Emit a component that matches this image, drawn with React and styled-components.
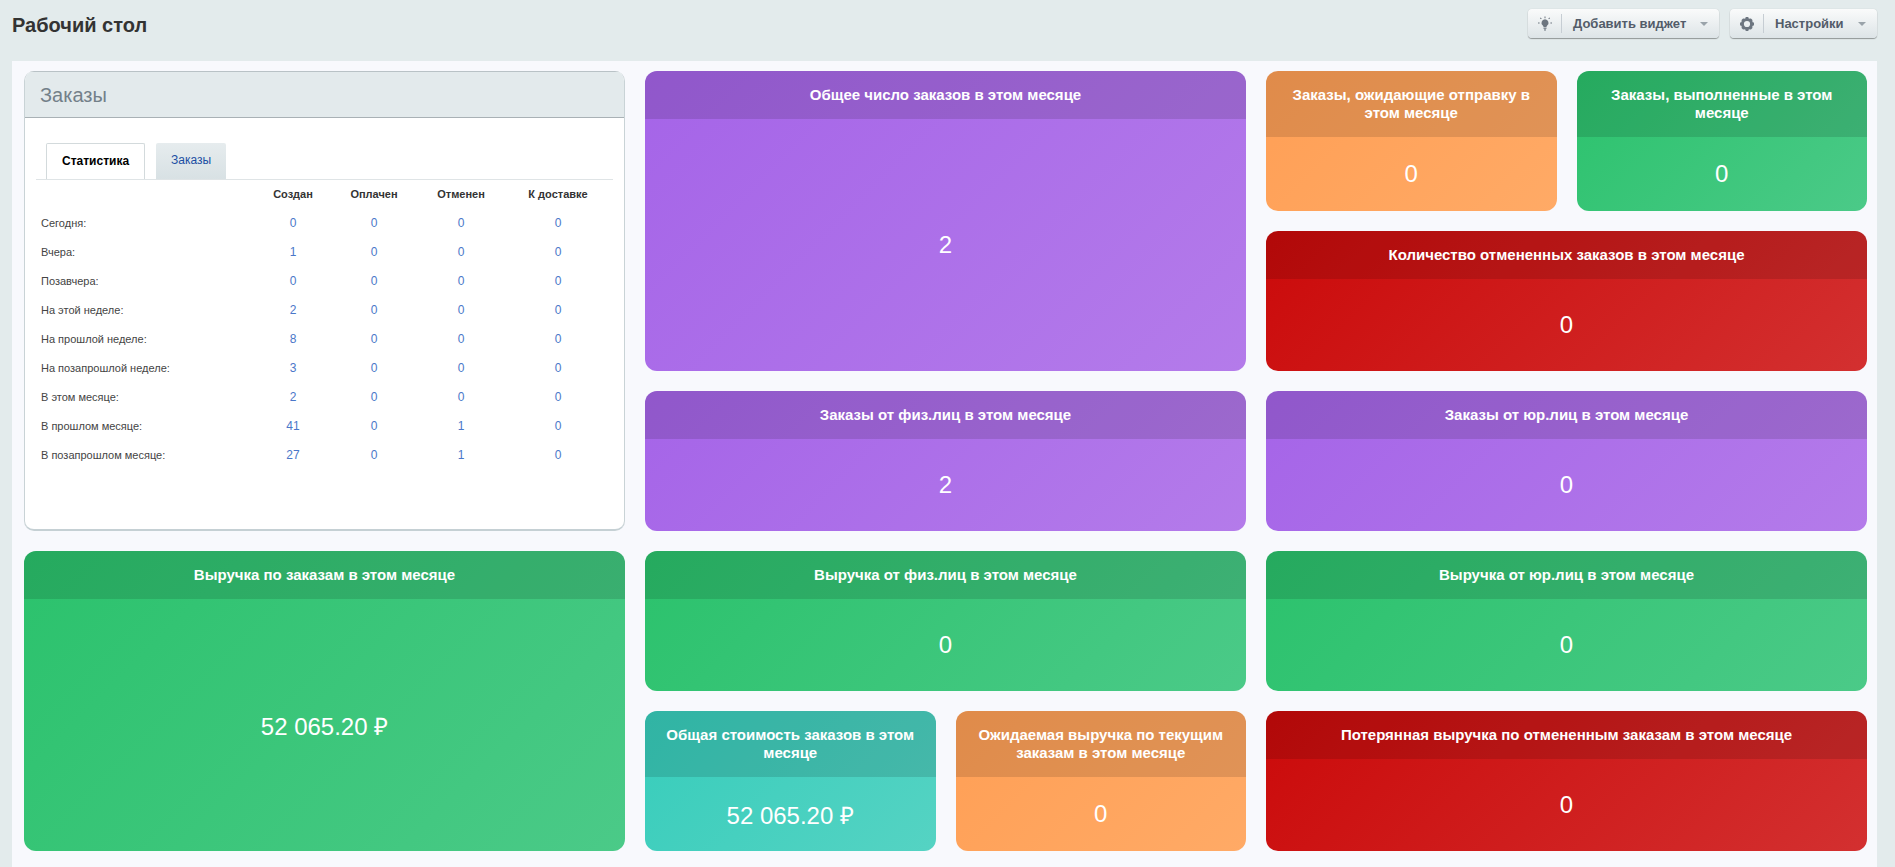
import React from "react";
import styled, { createGlobalStyle } from "styled-components";

const GlobalStyle = createGlobalStyle`
  html, body {
    margin: 0;
    padding: 0;
    background: #e3ebec;
    font-family: "Liberation Sans", Arial, sans-serif;
  }
`;

const Page = styled.div`
  width: 1895px;
  height: 867px;
  overflow: hidden;
  padding: 0 18px 0 12px;
  box-sizing: border-box;
`;

const TopBar = styled.div`
  display: flex;
  justify-content: space-between;
  align-items: flex-start;
  height: 61px;
  padding-top: 9px;
  box-sizing: border-box;
`;

const PageTitle = styled.h1`
  margin: 4px 0 0;
  font-size: 20px;
  line-height: 24px;
  font-weight: bold;
  color: #333;
`;

const Actions = styled.div`
  display: flex;
  gap: 11px;
`;

const ActionButton = styled.div`
  display: flex;
  align-items: center;
  height: 29px;
  width: ${(p) => p.$width}px;
  box-sizing: border-box;
  border-radius: 4px;
  background: linear-gradient(to bottom, #fafbfb, #dde4e7);
  box-shadow: 0 1px 1px rgba(0, 0, 0, 0.35), 0 0 1px rgba(0, 0, 0, 0.2);
  font-size: 13px;
  font-weight: bold;
  color: #535c69;
`;

const IconSlot = styled.span`
  display: flex;
  align-items: center;
  justify-content: center;
  width: 33px;
  height: 19px;
  border-right: 1px solid #c6cdd3;
`;

const ButtonLabel = styled.span`
  flex: 1;
  padding-left: 11px;
`;

const Caret = styled.span`
  width: 0;
  height: 0;
  margin-right: 11px;
  border-left: 4px solid transparent;
  border-right: 4px solid transparent;
  border-top: 4px solid #9aa3aa;
`;

const Content = styled.div`
  display: grid;
  grid-template-columns: repeat(6, 1fr);
  grid-auto-rows: 140px;
  gap: 20px;
  height: 806px;
  padding: 10px 10px 16px 12px;
  box-sizing: border-box;
  background: #f8f9fd;
`;

const Panel = styled.div`
  grid-column: span 2;
  grid-row: span 3;
  background: #fff;
  border: 1px solid #c9d3d6;
  border-bottom: 2px solid #c5d0d4;
  border-top: 0;
  border-radius: 10px;
  overflow: hidden;
`;

const PanelHead = styled.div`
  height: 47px;
  box-sizing: border-box;
  padding: 7px 15px;
  background: #e3eaec;
  border-top: 1px solid #b9c2c6;
  border-bottom: 1px solid #a9b1b5;
  font-size: 20px;
  line-height: 32px;
  color: #738089;
`;

const PanelBody = styled.div`
  padding: 25px 11px 0;
`;

const Tabs = styled.div`
  display: flex;
  gap: 11px;
  height: 36px;
  padding-left: 10px;
  border-bottom: 1px solid #dfe4e6;
`;

const Tab = styled.div`
  height: 36px;
  box-sizing: border-box;
  padding: 0 15px;
  font-size: 12px;
  line-height: 35px;
  border-radius: 2px 2px 0 0;
  ${(p) =>
    p.$active
      ? `
    font-weight: bold;
    color: #000;
    background: #fff;
    border: 1px solid #d3dadc;
    border-bottom: 0;
    padding: 0 15px;
  `
      : `
    color: #1c4ea3;
    background: linear-gradient(to bottom, #e6ecee, #d8e1e4);
  `}
`;

const StatsTable = styled.table`
  width: 577px;
  table-layout: fixed;
  border-collapse: collapse;
  font-size: 11px;
  color: #444;
`;

const HeadCell = styled.th`
  height: 28px;
  padding: 0;
  font-weight: bold;
  text-align: center;
  color: #333;
  width: ${(p) => p.$width}px;
`;

const LabelCell = styled.td`
  height: 29px;
  padding: 0 0 0 5px;
`;

const NumCell = styled.td`
  padding: 0;
  text-align: center;
  font-size: 12px;
  color: #4a77c9;
`;

const Card = styled.div`
  grid-column: span ${(p) => p.$cols || 1};
  grid-row: span ${(p) => p.$rows || 1};
  display: flex;
  flex-direction: column;
  border-radius: 12px;
  overflow: hidden;
  color: #fff;
  background: ${(p) => p.$bg};
`;

const CardHead = styled.div`
  padding: 15px 10px;
  font-size: 15px;
  line-height: 18px;
  font-weight: bold;
  text-align: center;
  background: rgba(0, 0, 0, 0.12);
`;

const CardValue = styled.div`
  flex: 1;
  display: flex;
  align-items: center;
  justify-content: center;
  font-size: 24px;
`;

const purple = "linear-gradient(135deg, #a564e8, #b47bea)";
const green = "linear-gradient(135deg, #2bc26c, #4bca88)";
const orange = "linear-gradient(135deg, #ff9f55, #ffaa66)";
const red = "linear-gradient(135deg, #cb0a0a, #d33030)";
const teal = "linear-gradient(135deg, #37cdbb, #55d3c3)";

const rows = [
  ["Сегодня:", 0, 0, 0, 0],
  ["Вчера:", 1, 0, 0, 0],
  ["Позавчера:", 0, 0, 0, 0],
  ["На этой неделе:", 2, 0, 0, 0],
  ["На прошлой неделе:", 8, 0, 0, 0],
  ["На позапрошлой неделе:", 3, 0, 0, 0],
  ["В этом месяце:", 2, 0, 0, 0],
  ["В прошлом месяце:", 41, 0, 1, 0],
  ["В позапрошлом месяце:", 27, 0, 1, 0],
];

const columns = [
  ["Создан", 72],
  ["Оплачен", 90],
  ["Отменен", 84],
  ["К доставке", 110],
];

function Widget({ title, value, bg, cols, rows: rowSpan }) {
  return (
    <Card $bg={bg} $cols={cols} $rows={rowSpan}>
      <CardHead>{title}</CardHead>
      <CardValue>{value}</CardValue>
    </Card>
  );
}

function BulbIcon() {
  return (
    <svg width="16" height="16" viewBox="0 0 16 16" fill="#6d7680">
      <path d="M8 3.2a3.6 3.6 0 0 0-2.2 6.4c.5.4.7.9.7 1.4h3c0-.5.2-1 .7-1.4A3.6 3.6 0 0 0 8 3.2z" />
      <rect x="6.5" y="11.6" width="3" height="1.2" />
      <rect x="7" y="13.4" width="2" height="1.1" />
      <path d="M7.5.6h1v1.6h-1zM1 6.5h1.6v1H1zM13.4 6.5H15v1h-1.6zM2.9 2.2l.7-.7 1.1 1.1-.7.7zM11.3 2.6l1.1-1.1.7.7-1.1 1.1z" />
    </svg>
  );
}

function GearIcon() {
  return (
    <svg width="16" height="16" viewBox="0 0 16 16">
      <circle cx="8" cy="8" r="4.6" fill="none" stroke="#6d7680" strokeWidth="3" />
      <path
        d="M6.6 1h2.8v2.4H6.6zM6.6 12.6h2.8V15H6.6zM1 6.6h2.4v2.8H1zM12.6 6.6H15v2.8h-2.4zM2.3 4.3l2-2 1.7 1.7-2 2zM10 12l2-2 1.7 1.7-2 2zM11.7 2.3l2 2-1.7 1.7-2-2zM4 10l2 2-1.700 1.700-2-2z"
        fill="#6d7680"
      />
    </svg>
  );
}

export default function App() {
  return (
    <Page>
      <GlobalStyle />
      <TopBar>
        <PageTitle>Рабочий стол</PageTitle>
        <Actions>
          <ActionButton $width={191}>
            <IconSlot>
              <BulbIcon />
            </IconSlot>
            <ButtonLabel>Добавить виджет</ButtonLabel>
            <Caret />
          </ActionButton>
          <ActionButton $width={147}>
            <IconSlot>
              <GearIcon />
            </IconSlot>
            <ButtonLabel>Настройки</ButtonLabel>
            <Caret />
          </ActionButton>
        </Actions>
      </TopBar>
      <Content>
        <Panel>
          <PanelHead>Заказы</PanelHead>
          <PanelBody>
            <Tabs>
              <Tab $active>Статистика</Tab>
              <Tab>Заказы</Tab>
            </Tabs>
            <StatsTable>
              <thead>
                <tr>
                  <HeadCell $width={221} />
                  {columns.map(([name, width]) => (
                    <HeadCell key={name} $width={width}>
                      {name}
                    </HeadCell>
                  ))}
                </tr>
              </thead>
              <tbody>
                {rows.map(([label, ...nums]) => (
                  <tr key={label}>
                    <LabelCell>{label}</LabelCell>
                    {nums.map((n, i) => (
                      <NumCell key={i}>{n}</NumCell>
                    ))}
                  </tr>
                ))}
              </tbody>
            </StatsTable>
          </PanelBody>
        </Panel>
        <Widget title="Общее число заказов в этом месяце" value="2" bg={purple} cols={2} rows={2} />
        <Widget title="Заказы, ожидающие отправку в этом месяце" value="0" bg={orange} />
        <Widget title="Заказы, выполненные в этом месяце" value="0" bg={green} />
        <Widget title="Количество отмененных заказов в этом месяце" value="0" bg={red} cols={2} />
        <Widget title="Заказы от физ.лиц в этом месяце" value="2" bg={purple} cols={2} />
        <Widget title="Заказы от юр.лиц в этом месяце" value="0" bg={purple} cols={2} />
        <Widget title="Выручка по заказам в этом месяце" value="52 065.20 ₽" bg={green} cols={2} rows={2} />
        <Widget title="Выручка от физ.лиц в этом месяце" value="0" bg={green} cols={2} />
        <Widget title="Выручка от юр.лиц в этом месяце" value="0" bg={green} cols={2} />
        <Widget title="Общая стоимость заказов в этом месяце" value="52 065.20 ₽" bg={teal} />
        <Widget title="Ожидаемая выручка по текущим заказам в этом месяце" value="0" bg={orange} />
        <Widget title="Потерянная выручка по отмененным заказам в этом месяце" value="0" bg={red} cols={2} />
      </Content>
    </Page>
  );
}
